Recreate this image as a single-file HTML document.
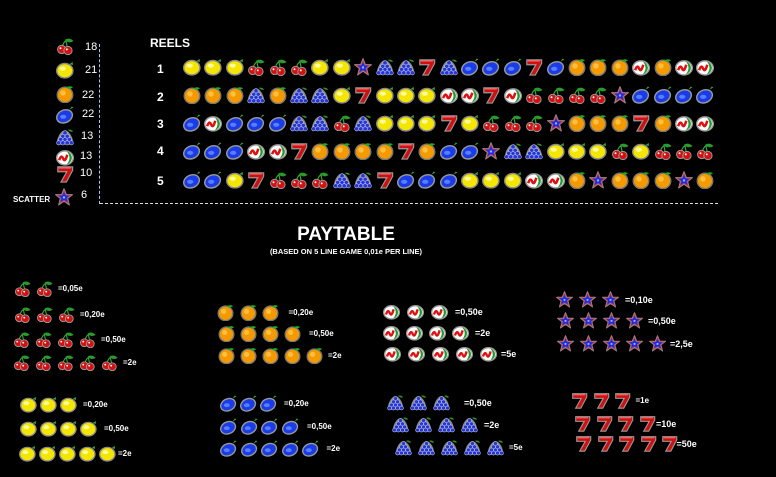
<!DOCTYPE html>
<html><head><meta charset="utf-8"><style>
body{margin:0;width:776px;height:477px;background:#000;position:relative;overflow:hidden;font-family:"Liberation Sans",Arial,sans-serif;color:#fff;font-weight:bold}
.a{position:absolute}
.r{position:absolute;display:flex;align-items:center}
.r svg{width:18px;height:18px;flex:none}
.p svg{width:17px;height:17px}
.t{font-size:8px;white-space:nowrap}
.n{position:absolute;font-size:11px;font-weight:normal}
.rn{position:absolute;font-size:12px}
</style></head><body>
<svg width="0" height="0" style="position:absolute">
<defs>
<symbol id="l" viewBox="0 0 20 20"><ellipse cx="9.8" cy="10.8" rx="9" ry="8" fill="#f4e600" stroke="#8a8a8a" stroke-width="1.6"/><ellipse cx="7.5" cy="8.5" rx="3.5" ry="2.3" fill="#fffaa0"/><path d="M15 3.5 l3.5 -2.5 l0.3 3.5z" fill="#3a3"/></symbol>
<symbol id="o" viewBox="0 0 20 20"><circle cx="10" cy="11" r="8.6" fill="#f49a00" stroke="#777" stroke-width="1.6"/><circle cx="7.8" cy="8.8" r="3" fill="#ffc040"/><path d="M11 3 q4 -3 8 -0.5 q-4 3 -8 0.5z" fill="#2a2"/></symbol>
<symbol id="u" viewBox="0 0 20 20"><ellipse cx="9.5" cy="11.5" rx="9" ry="7" transform="rotate(-25 9.5 11.5)" fill="#1a3ce8" stroke="#999" stroke-width="1.6"/><ellipse cx="8" cy="12" rx="3.5" ry="2.3" fill="#5a7cff"/><path d="M15 4 l2.5 -3.5 l1.8 1.2z" fill="#3a3"/></symbol>
<symbol id="c" viewBox="0 0 20 20"><path d="M10 3 q5 -3 9.5 1.5 q-5 3.5 -9.5 -1.5z" fill="#2a9a2a"/><path d="M11 4 q-4 3 -4 9 M11 4 q1 5 2 10" stroke="#3a3" fill="none" stroke-width="1.3"/><circle cx="6.3" cy="13.8" r="4.6" fill="#d51010" stroke="#999" stroke-width="1.1"/><circle cx="13.3" cy="15" r="4.6" fill="#d51010" stroke="#999" stroke-width="1.1"/><circle cx="5" cy="12.5" r="1.1" fill="#fff"/><circle cx="12" cy="13.7" r="1.1" fill="#fff"/></symbol>
<symbol id="g" viewBox="0 0 20 20"><path d="M13 2 q4 -1 6 2 q-3 1 -6 -2z" fill="#2a9a2a"/><path d="M10 2.5 C16 3 20 14 19 18.5 L1 18.5 C0 14 4 3 10 2.5z" fill="#888"/><g fill="#2436d8" stroke="#ccd" stroke-width=".6"><circle cx="10" cy="5.5" r="2.4"/><circle cx="7.6" cy="9.3" r="2.4"/><circle cx="12.4" cy="9.3" r="2.4"/><circle cx="5.2" cy="13" r="2.4"/><circle cx="10" cy="13" r="2.4"/><circle cx="14.8" cy="13" r="2.4"/><circle cx="3" cy="16.5" r="2.3"/><circle cx="7.6" cy="16.5" r="2.4"/><circle cx="12.4" cy="16.5" r="2.4"/><circle cx="17" cy="16.5" r="2.3"/></g></symbol>
<symbol id="m" viewBox="0 0 20 20"><ellipse cx="10" cy="11" rx="9.2" ry="7.8" fill="#fff" stroke="#999" stroke-width="1.6"/><path d="M12 3.8 A9.2 7.8 0 0 1 12 18.2 Q18 11 12 3.8z" fill="#1a9a2a"/><path d="M3.5 13.5 q2.5 -7 4.5 -1.5 q2 4.5 4.5 -4.5" stroke="#e01010" stroke-width="2.8" fill="none"/></symbol>
<symbol id="s" viewBox="0 0 20 20"><path d="M2 2 H18.5 V6 L11.5 19 H5.5 L12 7.5 H2z" fill="#d01010" stroke="#999" stroke-width="1.3"/><path d="M3 3.3 H16.5" stroke="#ff7070" stroke-width="1.2"/></symbol>
<symbol id="x" viewBox="0 0 20 20"><path d="M10 0.8 L12.5 7.2 L19.3 7.4 L14 11.6 L15.9 18.8 L10 14.6 L4.1 18.8 L6 11.6 L0.7 7.4 L7.5 7.2z" fill="#1030f0" stroke="#9a8a8a" stroke-width="1.2" stroke-linejoin="round"/><path d="M10 2.6 L12 7.9 L17.5 8.1 L13.3 11.4 L14.7 17 L10 13.7 L5.3 17 L6.7 11.4 L2.5 8.1 L8 7.9z" fill="#1030f0" stroke="#e04040" stroke-width="0.8"/><circle cx="10" cy="10.5" r="1.3" fill="#aaf"/></symbol>
</defs></svg>

<div class="r" style="left:56px;top:37px"><svg><use href="#c"/></svg></div>
<div class="r" style="left:56px;top:61px"><svg><use href="#l"/></svg></div>
<div class="r" style="left:56px;top:85px"><svg><use href="#o"/></svg></div>
<div class="r" style="left:56px;top:106px"><svg><use href="#u"/></svg></div>
<div class="r" style="left:56px;top:128px"><svg><use href="#g"/></svg></div>
<div class="r" style="left:56px;top:148px"><svg><use href="#m"/></svg></div>
<div class="r" style="left:56px;top:165px"><svg><use href="#s"/></svg></div>
<div class="r" style="left:55px;top:188px"><svg><use href="#x"/></svg></div>
<div class="n" style="left:85px;top:41px">18</div>
<div class="n" style="left:85px;top:64px">21</div>
<div class="n" style="left:82px;top:89px">22</div>
<div class="n" style="left:82px;top:108px">22</div>
<div class="n" style="left:81px;top:130px">13</div>
<div class="n" style="left:80px;top:150px">13</div>
<div class="n" style="left:80px;top:167px">10</div>
<div class="n" style="left:81px;top:189px">6</div>
<div class="a" style="left:13px;top:195px;font-size:8px">SCATTER</div>

<div class="a" style="left:99px;top:44px;height:160px;border-left:1px dashed #9cf"></div>
<div class="a" style="left:100px;top:203px;width:618px;border-top:1px dashed #ddd"></div>

<div class="a" style="left:150px;top:36px;font-size:12px">REELS</div>
<div class="rn" style="left:157px;top:62px">1</div>
<div class="rn" style="left:157px;top:90px">2</div>
<div class="rn" style="left:157px;top:117px">3</div>
<div class="rn" style="left:157px;top:144px">4</div>
<div class="rn" style="left:157px;top:174px">5</div>

<div class="r" style="left:183px;top:58px;gap:3.4px"><svg><use href="#l"/></svg><svg><use href="#l"/></svg><svg><use href="#l"/></svg><svg><use href="#c"/></svg><svg><use href="#c"/></svg><svg><use href="#c"/></svg><svg><use href="#l"/></svg><svg><use href="#l"/></svg><svg><use href="#x"/></svg><svg><use href="#g"/></svg><svg><use href="#g"/></svg><svg><use href="#s"/></svg><svg><use href="#g"/></svg><svg><use href="#u"/></svg><svg><use href="#u"/></svg><svg><use href="#u"/></svg><svg><use href="#s"/></svg><svg><use href="#u"/></svg><svg><use href="#o"/></svg><svg><use href="#o"/></svg><svg><use href="#o"/></svg><svg><use href="#m"/></svg><svg><use href="#o"/></svg><svg><use href="#m"/></svg><svg><use href="#m"/></svg></div>
<div class="r" style="left:183px;top:86px;gap:3.4px"><svg><use href="#o"/></svg><svg><use href="#o"/></svg><svg><use href="#o"/></svg><svg><use href="#g"/></svg><svg><use href="#o"/></svg><svg><use href="#g"/></svg><svg><use href="#g"/></svg><svg><use href="#l"/></svg><svg><use href="#s"/></svg><svg><use href="#l"/></svg><svg><use href="#l"/></svg><svg><use href="#l"/></svg><svg><use href="#m"/></svg><svg><use href="#m"/></svg><svg><use href="#s"/></svg><svg><use href="#m"/></svg><svg><use href="#c"/></svg><svg><use href="#c"/></svg><svg><use href="#c"/></svg><svg><use href="#c"/></svg><svg><use href="#x"/></svg><svg><use href="#u"/></svg><svg><use href="#u"/></svg><svg><use href="#u"/></svg><svg><use href="#u"/></svg></div>
<div class="r" style="left:183px;top:114px;gap:3.4px"><svg><use href="#u"/></svg><svg><use href="#m"/></svg><svg><use href="#u"/></svg><svg><use href="#u"/></svg><svg><use href="#u"/></svg><svg><use href="#g"/></svg><svg><use href="#g"/></svg><svg><use href="#c"/></svg><svg><use href="#g"/></svg><svg><use href="#l"/></svg><svg><use href="#l"/></svg><svg><use href="#l"/></svg><svg><use href="#s"/></svg><svg><use href="#l"/></svg><svg><use href="#c"/></svg><svg><use href="#c"/></svg><svg><use href="#c"/></svg><svg><use href="#x"/></svg><svg><use href="#o"/></svg><svg><use href="#o"/></svg><svg><use href="#o"/></svg><svg><use href="#s"/></svg><svg><use href="#o"/></svg><svg><use href="#m"/></svg><svg><use href="#m"/></svg></div>
<div class="r" style="left:183px;top:142px;gap:3.4px"><svg><use href="#u"/></svg><svg><use href="#u"/></svg><svg><use href="#u"/></svg><svg><use href="#m"/></svg><svg><use href="#m"/></svg><svg><use href="#s"/></svg><svg><use href="#o"/></svg><svg><use href="#o"/></svg><svg><use href="#o"/></svg><svg><use href="#o"/></svg><svg><use href="#s"/></svg><svg><use href="#o"/></svg><svg><use href="#u"/></svg><svg><use href="#u"/></svg><svg><use href="#x"/></svg><svg><use href="#g"/></svg><svg><use href="#g"/></svg><svg><use href="#l"/></svg><svg><use href="#l"/></svg><svg><use href="#l"/></svg><svg><use href="#c"/></svg><svg><use href="#l"/></svg><svg><use href="#c"/></svg><svg><use href="#c"/></svg><svg><use href="#c"/></svg></div>
<div class="r" style="left:183px;top:171px;gap:3.4px"><svg><use href="#u"/></svg><svg><use href="#u"/></svg><svg><use href="#l"/></svg><svg><use href="#s"/></svg><svg><use href="#c"/></svg><svg><use href="#c"/></svg><svg><use href="#c"/></svg><svg><use href="#g"/></svg><svg><use href="#g"/></svg><svg><use href="#s"/></svg><svg><use href="#u"/></svg><svg><use href="#u"/></svg><svg><use href="#u"/></svg><svg><use href="#l"/></svg><svg><use href="#l"/></svg><svg><use href="#l"/></svg><svg><use href="#m"/></svg><svg><use href="#m"/></svg><svg><use href="#o"/></svg><svg><use href="#x"/></svg><svg><use href="#o"/></svg><svg><use href="#o"/></svg><svg><use href="#o"/></svg><svg><use href="#x"/></svg><svg><use href="#o"/></svg></div>

<div class="a" style="left:246px;top:224px;width:200px;text-align:center;font-size:19px">PAYTABLE</div>
<div class="a" style="left:246px;top:247px;width:200px;text-align:center;font-size:7.5px">(BASED ON 5 LINE GAME 0,01e PER LINE)</div>

<div class="r p" style="left:14px;top:280px;gap:5px"><svg><use href="#c"/></svg><svg><use href="#c"/></svg><span class="t">=0,05e</span></div>
<div class="r p" style="left:14px;top:306px;gap:5px"><svg><use href="#c"/></svg><svg><use href="#c"/></svg><svg><use href="#c"/></svg><span class="t">=0,20e</span></div>
<div class="r p" style="left:13px;top:331px;gap:5px"><svg><use href="#c"/></svg><svg><use href="#c"/></svg><svg><use href="#c"/></svg><svg><use href="#c"/></svg><span class="t">=0,50e</span></div>
<div class="r p" style="left:13px;top:354px;gap:5px"><svg><use href="#c"/></svg><svg><use href="#c"/></svg><svg><use href="#c"/></svg><svg><use href="#c"/></svg><svg><use href="#c"/></svg><span class="t">=2e</span></div>

<div class="r p" style="left:217px;top:304px;gap:5.5px"><svg><use href="#o"/></svg><svg><use href="#o"/></svg><svg><use href="#o"/></svg><span class="t" style="margin-left:4px">=0,20e</span></div>
<div class="r p" style="left:218px;top:325px;gap:5px"><svg><use href="#o"/></svg><svg><use href="#o"/></svg><svg><use href="#o"/></svg><svg><use href="#o"/></svg><span class="t" style="margin-left:3px">=0,50e</span></div>
<div class="r p" style="left:218px;top:347px;gap:5px"><svg><use href="#o"/></svg><svg><use href="#o"/></svg><svg><use href="#o"/></svg><svg><use href="#o"/></svg><svg><use href="#o"/></svg><span class="t">=2e</span></div>

<div class="r p" style="left:383px;top:303px;gap:7px"><svg><use href="#m"/></svg><svg><use href="#m"/></svg><svg><use href="#m"/></svg><span class="t" style="font-size:9px">=0,50e</span></div>
<div class="r p" style="left:383px;top:324px;gap:6px"><svg><use href="#m"/></svg><svg><use href="#m"/></svg><svg><use href="#m"/></svg><svg><use href="#m"/></svg><span class="t" style="font-size:9px">=2e</span></div>
<div class="r p" style="left:384px;top:345px;gap:7px"><svg><use href="#m"/></svg><svg><use href="#m"/></svg><svg><use href="#m"/></svg><svg><use href="#m"/></svg><svg><use href="#m"/></svg><span class="t" style="margin-left:-3px;font-size:9px">=5e</span></div>

<div class="r p" style="left:556px;top:291px;gap:6px"><svg><use href="#x"/></svg><svg><use href="#x"/></svg><svg><use href="#x"/></svg><span class="t" style="font-size:9px">=0,10e</span></div>
<div class="r p" style="left:557px;top:312px;gap:6px"><svg><use href="#x"/></svg><svg><use href="#x"/></svg><svg><use href="#x"/></svg><svg><use href="#x"/></svg><span class="t" style="margin-left:-1px;font-size:9px">=0,50e</span></div>
<div class="r p" style="left:557px;top:335px;gap:6px"><svg><use href="#x"/></svg><svg><use href="#x"/></svg><svg><use href="#x"/></svg><svg><use href="#x"/></svg><svg><use href="#x"/></svg><span class="t" style="margin-left:-2px;font-size:9px">=2,5e</span></div>

<div class="r p" style="left:20px;top:396px;gap:3px"><svg><use href="#l"/></svg><svg><use href="#l"/></svg><svg><use href="#l"/></svg><span class="t" style="margin-left:3px">=0,20e</span></div>
<div class="r p" style="left:20px;top:420px;gap:3px"><svg><use href="#l"/></svg><svg><use href="#l"/></svg><svg><use href="#l"/></svg><svg><use href="#l"/></svg><span class="t" style="margin-left:4px">=0,50e</span></div>
<div class="r p" style="left:19px;top:445px;gap:3px"><svg><use href="#l"/></svg><svg><use href="#l"/></svg><svg><use href="#l"/></svg><svg><use href="#l"/></svg><svg><use href="#l"/></svg><span class="t" style="margin-left:-1px">=2e</span></div>

<div class="r p" style="left:220px;top:395px;gap:3px"><svg><use href="#u"/></svg><svg><use href="#u"/></svg><svg><use href="#u"/></svg><span class="t" style="margin-left:4px">=0,20e</span></div>
<div class="r p" style="left:220px;top:418px;gap:3.5px"><svg><use href="#u"/></svg><svg><use href="#u"/></svg><svg><use href="#u"/></svg><svg><use href="#u"/></svg><span class="t" style="margin-left:5px">=0,50e</span></div>
<div class="r p" style="left:220px;top:440px;gap:3.5px"><svg><use href="#u"/></svg><svg><use href="#u"/></svg><svg><use href="#u"/></svg><svg><use href="#u"/></svg><svg><use href="#u"/></svg><span class="t" style="margin-left:4px">=2e</span></div>

<div class="r p" style="left:387px;top:394px;gap:6px"><svg><use href="#g"/></svg><svg><use href="#g"/></svg><svg><use href="#g"/></svg><span class="t" style="margin-left:8px;font-size:9px">=0,50e</span></div>
<div class="r p" style="left:392px;top:416px;gap:6px"><svg><use href="#g"/></svg><svg><use href="#g"/></svg><svg><use href="#g"/></svg><svg><use href="#g"/></svg><span class="t" style="font-size:9px">=2e</span></div>
<div class="r p" style="left:395px;top:439px;gap:6px"><svg><use href="#g"/></svg><svg><use href="#g"/></svg><svg><use href="#g"/></svg><svg><use href="#g"/></svg><svg><use href="#g"/></svg><span class="t" style="margin-left:-1px">=5e</span></div>

<div class="r p" style="left:571px;top:392px;gap:4.5px"><svg><use href="#s"/></svg><svg><use href="#s"/></svg><svg><use href="#s"/></svg><span class="t">=1e</span></div>
<div class="r p" style="left:574px;top:415px;gap:4.5px"><svg><use href="#s"/></svg><svg><use href="#s"/></svg><svg><use href="#s"/></svg><svg><use href="#s"/></svg><span class="t" style="margin-left:-4px;font-size:9px">=10e</span></div>
<div class="r p" style="left:575px;top:435px;gap:4.5px"><svg><use href="#s"/></svg><svg><use href="#s"/></svg><svg><use href="#s"/></svg><svg><use href="#s"/></svg><svg><use href="#s"/></svg><span class="t" style="margin-left:-6px;font-size:9px">=50e</span></div>
</body></html>
